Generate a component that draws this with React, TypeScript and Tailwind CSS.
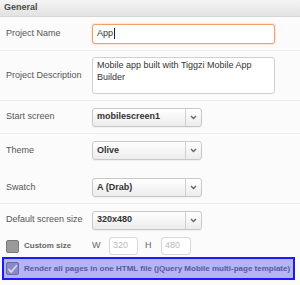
import React from "react";

const font = { fontFamily: '"Liberation Sans", Arial, sans-serif' };

function Chevron() {
  return (
    <svg width="7" height="5" viewBox="0 0 7 5">
      <path d="M1 1 L3.5 3.5 L6 1" stroke="#666" strokeWidth="1.4" fill="none" />
    </svg>
  );
}

function Select({ value }: { value: string }) {
  return (
    <div className="flex h-[19px] w-[110px] rounded-[3px] border border-[#c8c8c8] bg-gradient-to-b from-[#ffffff] to-[#ececec] shadow-[0_1px_1px_rgba(0,0,0,0.05)]">
      <div className="flex flex-1 items-center pl-[4px] text-[9px] font-bold text-[#333]">{value}</div>
      <div className="flex w-[16px] items-center justify-center border-l border-[#d0d0d0]">
        <Chevron />
      </div>
    </div>
  );
}

function Label({ children }: { children: React.ReactNode }) {
  return <div className="w-[86px] shrink-0 text-[9px] text-[#555]">{children}</div>;
}

export default function App() {
  return (
    <div className="h-[285px] w-[300px] overflow-hidden bg-[#fbfbfb]" style={font}>
      <div className="flex h-[17px] items-center border-b border-[#d6d6d6] bg-gradient-to-b from-[#f4f4f4] to-[#e2e2e2] pl-[4px] text-[9px] font-bold text-[#4a4a4a]">
        General
      </div>
      <div className="flex h-[34px] items-center border-b border-[#ececec] pl-[6px]">
        <Label>Project Name</Label>
        <div className="flex h-[20px] w-[183px] items-center rounded-[3px] border border-[#f0a070] bg-white pl-[4px] text-[9px] text-[#333] shadow-[0_0_2px_rgba(240,140,80,0.6)]">
          App<span className="ml-[1px] inline-block h-[11px] w-px bg-[#222]" />
        </div>
      </div>
      <div className="flex h-[50px] items-center border-b border-[#ececec] pl-[6px]">
        <Label>Project Description</Label>
        <div className="h-[37px] w-[183px] rounded-[3px] border border-[#cfcfcf] bg-white px-[4px] pt-[1px] text-[9px] leading-[12px] text-[#333]">
          Mobile app built with Tiggzi Mobile App Builder
        </div>
      </div>
      <div className="flex h-[33px] items-center border-b border-[#ececec] pl-[6px]">
        <Label>Start screen</Label>
        <Select value="mobilescreen1" />
      </div>
      <div className="flex h-[38px] items-start pl-[6px] pt-[7px]">
        <div className="flex h-[19px] items-center">
          <Label>Theme</Label>
        </div>
        <Select value="Olive" />
      </div>
      <div className="flex h-[32px] items-center border-b border-[#ececec] pl-[6px]">
        <Label>Swatch</Label>
        <Select value="A (Drab)" />
      </div>
      <div className="flex h-[32px] items-center pl-[6px]">
        <Label>Default screen size</Label>
        <Select value="320x480" />
      </div>
      <div className="flex h-[20px] items-center pl-[6px]">
        <div className="flex w-[86px] shrink-0 items-center">
          <div className="h-[13px] w-[13px] rounded-[2px] border border-[#7a7a7a] bg-[#9a9a9a]" />
          <span className="ml-[5px] text-[8px] font-bold text-[#666]">Custom size</span>
        </div>
        <span className="w-[17px] text-[9px] text-[#666]">W</span>
        <div className="flex h-[18px] w-[29px] items-center rounded-[3px] border border-[#d8d8d8] bg-white pl-[3px] text-[9px] text-[#bbb]">320</div>
        <span className="ml-[7px] w-[16px] text-[9px] text-[#666]">H</span>
        <div className="flex h-[18px] w-[30px] items-center rounded-[3px] border border-[#d8d8d8] bg-white pl-[3px] text-[9px] text-[#bbb]">480</div>
      </div>
      <div className="ml-[2px] mt-[1px] flex h-[23px] w-[293px] items-center border-2 border-[#1a1aff] bg-[#b4b4f6] pl-[2px]">
        <div className="flex h-[13px] w-[13px] items-center justify-center rounded-[2px] border border-[#6a6aa8] bg-[#8a8ac8]">
          <svg width="11" height="10" viewBox="0 0 11 10">
            <path d="M1.5 5 L4.2 8 L9.8 1.2" stroke="#d8d8f4" strokeWidth="1.6" fill="none" />
          </svg>
        </div>
        <span className="ml-[5px] whitespace-nowrap text-[8px] font-bold text-[#5858a4]">
          Render all pages in one HTML file (jQuery Mobile multi-page template)
        </span>
      </div>
    </div>
  );
}
